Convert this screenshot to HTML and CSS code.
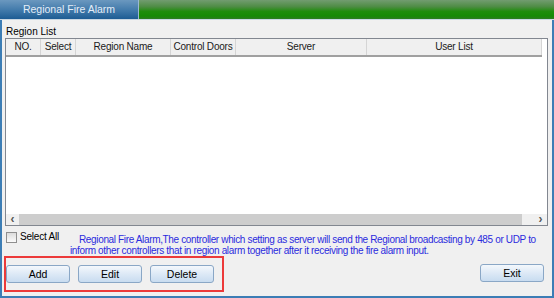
FILE: index.html
```html
<!DOCTYPE html>
<html lang="en">
<head>
    <meta charset="UTF-8">
    <title>Regional Fire Alarm</title>
    <link rel="stylesheet" href="styles.css">
</head>
<body>
    <div class="window">
        <div class="titlebar">
            <div class="tab">Regional Fire Alarm</div>
            <div class="band"></div>
        </div>
        <div class="content">
            <div class="caption">Region List</div>
            <div class="grid">
                <div class="grid-head">
                    <div class="col col-no">NO.</div>
                    <div class="col col-select">Select</div>
                    <div class="col col-name">Region Name</div>
                    <div class="col col-doors">Control Doors</div>
                    <div class="col col-server">Server</div>
                    <div class="col col-users">User List</div>
                </div>
                <div class="grid-body"></div>
                <div class="hscroll">
                    <div class="arrow">&lsaquo;</div>
                    <div class="thumb"></div>
                    <div class="track"></div>
                    <div class="arrow">&rsaquo;</div>
                </div>
            </div>
            <div class="info-row">
                <label class="check"><span class="box"></span>Select All</label>
                <p class="notice">
                    <span class="first">Regional Fire Alarm,The controller which setting as server will send the Regional broadcasting by 485 or UDP to</span>
                    <span>inform other controllers that in region alarm together after it receiving the fire alarm input.</span>
                </p>
            </div>
            <div class="actions">
                <div class="group">
                    <button>Add</button>
                    <button>Edit</button>
                    <button>Delete</button>
                </div>
                <button class="exit">Exit</button>
            </div>
        </div>
    </div>
</body>
</html>
```
FILE: styles.css
```css
body {
    margin: 0;
    font-family: "Liberation Sans", Arial, sans-serif;
    font-size: 10px;
    color: #000;
    background-color: #f0f0f0;
}

.window {
    width: 554px;
    height: 298px;
    box-sizing: border-box;
    border-left: 2px solid #3c7db5;
    border-right: 2px solid #3c7db5;
    border-bottom: 2px solid #3c7db5;
    display: flex;
    flex-direction: column;
    background-color: #f0f0f0;
}

.titlebar {
    display: flex;
    height: 19px;
    margin-left: -2px;
    margin-right: -2px;
    border-bottom: 1px solid #c9d7e2;
}

.tab {
    width: 138px;
    background: linear-gradient(#6b98bf, #4079aa 55%, #1d5c93);
    color: #e4eef8;
    font-size: 10.5px;
    text-align: center;
    line-height: 19px;
    border-right: 1px solid #9ab8d2;
}

.band {
    flex: 1;
    background: linear-gradient(#729c70, #4f8c45 35%, #1f8d0c 60%, #168a05 85%, #2d7c23);
}

.content {
    flex: 1;
    display: flex;
    flex-direction: column;
    padding: 0 4px 0 3px;
}

.caption {
    margin-top: 5px;
    height: 13px;
    line-height: 13px;
    padding-left: 1px;
}

.grid {
    height: 188px;
    box-sizing: border-box;
    border: 1px solid #828790;
    background-color: #fff;
    display: flex;
    flex-direction: column;
}

.grid-head {
    display: flex;
    height: 16px;
    background-color: #f0f0f0;
    border-bottom: 2px solid #a0a0a0;
    margin-right: 5px;
}

.col {
    line-height: 16px;
    text-align: center;
    border-right: 1px solid #d5d5d5;
    white-space: nowrap;
    color: #1a1a1a;
    letter-spacing: -0.2px;
}

.col-no { width: 34px; }
.col-select { width: 34px; }
.col-name { width: 94px; }
.col-doors { width: 64px; }
.col-server { width: 130px; }
.col-users { flex: 1; }

.grid-body {
    flex: 1;
}

.hscroll {
    display: flex;
    height: 11px;
    background-color: #f0f0f0;
}

.arrow {
    width: 13px;
    line-height: 10px;
    text-align: center;
    font-size: 12px;
    font-weight: bold;
    color: #555;
}

.thumb {
    width: 503px;
    background-color: #cdcdcd;
}

.track {
    flex: 1;
}

.info-row {
    display: flex;
    margin-top: 5px;
    height: 25px;
}

.check {
    display: flex;
    align-items: flex-start;
    gap: 3px;
    width: 64px;
    line-height: 12px;
    padding-left: 1px;
    letter-spacing: -0.2px;
}

.box {
    width: 9px;
    height: 9px;
    margin-top: 1px;
    border: 1px solid #8f8f8f;
    background: linear-gradient(#dcdcdc, #fbfbfb);
}

.notice {
    flex: 1;
    margin: 3px 0 0 0;
    color: #2b2bde;
    font-size: 10px;
    line-height: 11px;
    letter-spacing: -0.35px;
    white-space: nowrap;
    display: flex;
    flex-direction: column;
}

.notice .first {
    padding-left: 9px;
}

.actions {
    display: flex;
    align-items: center;
    justify-content: space-between;
}

.group {
    display: flex;
    gap: 8px;
    width: 216px;
    height: 32px;
    align-items: center;
    border: 2px solid #ec3a3a;
    margin-left: -1px;
}

button {
    width: 64px;
    height: 18px;
    padding: 0;
    font-family: inherit;
    font-size: 10.5px;
    color: #000;
    border: 1px solid #8aa7c6;
    border-radius: 3px;
    background: linear-gradient(#f4f8fc, #dde9f6 50%, #c8dcf0);
}

.exit {
    margin-right: 4px;
    margin-top: -2px;
}
```
